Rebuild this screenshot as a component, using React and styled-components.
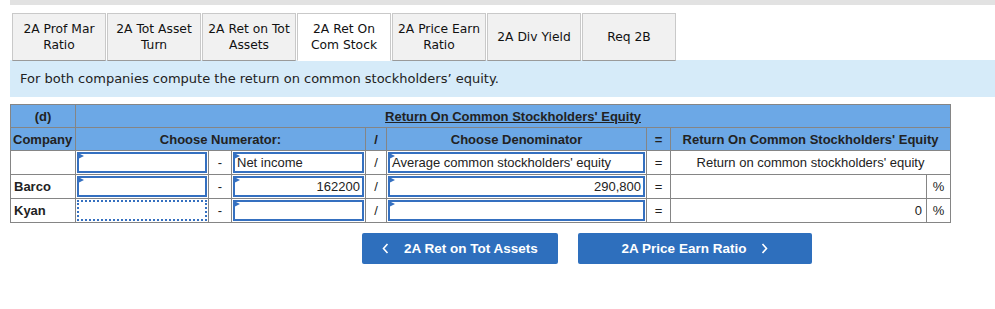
import styled, { createGlobalStyle } from 'styled-components';

const Global = createGlobalStyle`
  body {
    margin: 0;
    background: #fff;
    font-family: "Liberation Sans", Arial, sans-serif;
    color: #222;
  }
`;

const Page = styled.div`
  padding-left: 10px;
`;

const TopBar = styled.div`
  height: 5px;
  background: #e2e2e2;
`;

const Tabs = styled.div`
  display: flex;
  gap: 1px;
  margin-top: 8px;
  padding-left: 2px;
`;

const Tab = styled.div`
  width: 94px;
  height: 48px;
  box-sizing: border-box;
  display: flex;
  align-items: center;
  justify-content: center;
  text-align: center;
  font-family: "DejaVu Sans", Verdana, sans-serif;
  font-size: 12.3px;
  line-height: 16px;
  color: #111;
  background: ${p => (p.$active ? '#fff' : '#f1f1f1')};
  border: 1px solid #c9c9c9;
  border-bottom: ${p => (p.$active ? '1px solid #fff' : '1px solid #9a9a9a')};
  margin-bottom: -1px;
  position: relative;
`;

const Instruction = styled.div`
  height: 37px;
  background: #d6ebf9;
  display: flex;
  align-items: center;
  padding-left: 10px;
  font-family: "DejaVu Sans", Verdana, sans-serif;
  font-size: 13px;
  color: #222;
`;

const Grid = styled.table`
  margin-top: 7px;
  border-collapse: collapse;
  table-layout: fixed;
  width: 940px;
  font-size: 13px;
`;

const Th = styled.th`
  background: #6ca8e6;
  border: 1px solid #858585;
  height: 22px;
  padding: 0 2px;
  font-weight: bold;
  font-size: 13px;
  color: #222;
  text-align: ${p => p.$align || 'center'};
`;

const Title = styled.span`
  text-decoration: underline;
`;

const Td = styled.td`
  border: 1px solid #858585;
  height: 23px;
  padding: 0;
  text-align: ${p => p.$align || 'center'};
  font-weight: ${p => (p.$bold ? 'bold' : 'normal')};
  padding-left: ${p => (p.$bold ? '3px' : '0')};
  color: #222;
`;

const Field = styled.div`
  position: relative;
  margin: 1px;
  height: 21px;
  box-sizing: border-box;
  border: 2px ${p => (p.$focus ? 'dotted' : 'solid')} #3570c0;
  display: flex;
  align-items: center;
  justify-content: ${p => (p.$right ? 'flex-end' : 'flex-start')};
  padding: 0 2px;
  font-size: 13px;
  color: #222;
  background: #fff;

  &::before {
    content: '';
    display: ${p => (p.$marker ? 'block' : 'none')};
    position: absolute;
    left: -1px;
    top: -1px;
    border-style: solid;
    border-width: 3px 0 3px 6px;
    border-color: transparent transparent transparent #3570c0;
  }
`;

const Unit = styled.span`
  display: block;
  text-align: center;
`;

const Nav = styled.div`
  display: flex;
  gap: 20px;
  margin-top: 10px;
  padding-left: 352px;
`;

const NavButton = styled.button`
  width: ${p => p.$w}px;
  height: 31px;
  border: none;
  border-radius: 2px;
  background: #2e6fbd;
  color: #fff;
  font-family: "Liberation Sans", Arial, sans-serif;
  font-weight: bold;
  font-size: 13.5px;
  display: flex;
  align-items: center;
  justify-content: center;
  gap: 15px;
  padding: 0;
`;

const Chevron = ({ dir }) => (
  <svg width="7" height="11" viewBox="0 0 7 11">
    <path
      d={dir === 'left' ? 'M5.5 1 L1.5 5.5 L5.5 10' : 'M1.5 1 L5.5 5.5 L1.5 10'}
      fill="none"
      stroke="#fff"
      strokeWidth="1.6"
    />
  </svg>
);

const tabs = [
  ['2A Prof Mar', 'Ratio'],
  ['2A Tot Asset', 'Turn'],
  ['2A Ret on Tot', 'Assets'],
  ['2A Ret On', 'Com Stock'],
  ['2A Price Earn', 'Ratio'],
  ['2A Div Yield'],
  ['Req 2B'],
];

export default function App() {
  return (
    <Page>
      <Global />
      <TopBar />
      <Tabs>
        {tabs.map((t, i) => (
          <Tab key={i} $active={i === 3}>
            <div>
              {t[0]}
              {t[1] && <br />}
              {t[1]}
            </div>
          </Tab>
        ))}
      </Tabs>
      <Instruction>For both companies compute the return on common stockholders’ equity.</Instruction>

      <Grid>
        <colgroup>
          <col style={{ width: 65 }} />
          <col style={{ width: 133 }} />
          <col style={{ width: 23 }} />
          <col style={{ width: 134 }} />
          <col style={{ width: 21 }} />
          <col style={{ width: 260 }} />
          <col style={{ width: 24 }} />
          <col style={{ width: 256 }} />
          <col style={{ width: 24 }} />
        </colgroup>
        <thead>
          <tr>
            <Th>(d)</Th>
            <Th colSpan={8}>
              <Title>Return On Common Stockholders' Equity</Title>
            </Th>
          </tr>
          <tr>
            <Th $align="left">Company</Th>
            <Th colSpan={3}>Choose Numerator:</Th>
            <Th>/</Th>
            <Th>Choose Denominator</Th>
            <Th>=</Th>
            <Th colSpan={2}>Return On Common Stockholders' Equity</Th>
          </tr>
        </thead>
        <tbody>
          <tr>
            <Td />
            <Td><Field $marker /></Td>
            <Td>-</Td>
            <Td><Field $marker>Net income</Field></Td>
            <Td>/</Td>
            <Td><Field $marker>Average common stockholders' equity</Field></Td>
            <Td>=</Td>
            <Td colSpan={2}>Return on common stockholders' equity</Td>
          </tr>
          <tr>
            <Td $bold $align="left">Barco</Td>
            <Td><Field $marker /></Td>
            <Td>-</Td>
            <Td><Field $marker $right>162200</Field></Td>
            <Td>/</Td>
            <Td><Field $marker $right>290,800</Field></Td>
            <Td>=</Td>
            <Td $align="right" />
            <Td><Unit>%</Unit></Td>
          </tr>
          <tr>
            <Td $bold $align="left">Kyan</Td>
            <Td><Field $focus /></Td>
            <Td>-</Td>
            <Td><Field $marker /></Td>
            <Td>/</Td>
            <Td><Field $marker /></Td>
            <Td>=</Td>
            <Td $align="right" style={{ paddingRight: 4 }}>0</Td>
            <Td><Unit>%</Unit></Td>
          </tr>
        </tbody>
      </Grid>

      <Nav>
        <NavButton $w={196}>
          <Chevron dir="left" />
          <span>2A Ret on Tot Assets</span>
        </NavButton>
        <NavButton $w={234}>
          <span>2A Price Earn Ratio</span>
          <Chevron dir="right" />
        </NavButton>
      </Nav>
    </Page>
  );
}
